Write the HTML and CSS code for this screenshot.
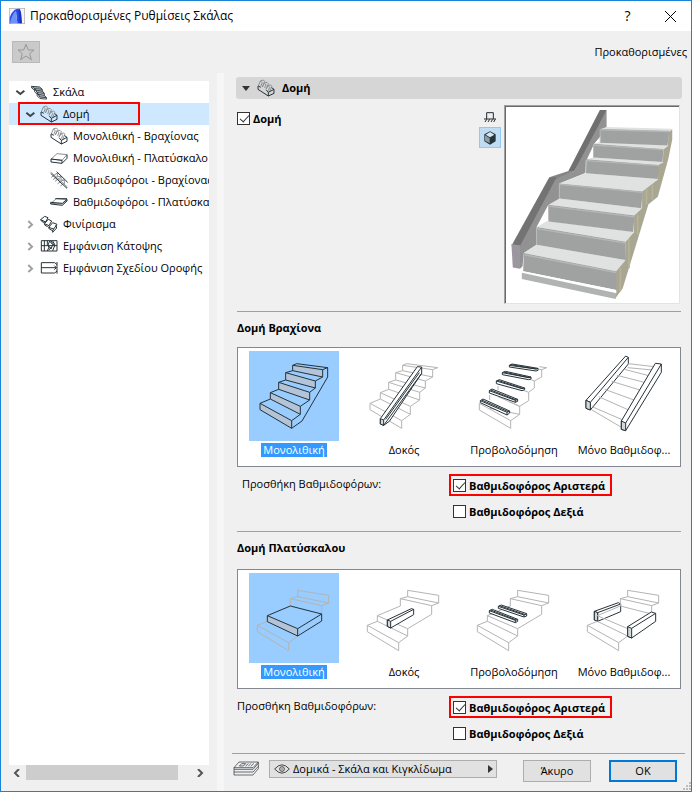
FILE: index.html
```html
<!DOCTYPE html>
<html lang="el">
<head>
    <meta charset="UTF-8" />
    <meta name="viewport" content="width=device-width, initial-scale=1.0" />
    <title>Προκαθορισμένες Ρυθμίσεις Σκάλας</title>
    <link rel="stylesheet" href="styles.css">
</head>
<body>
<!-- shared drawings -->
<svg class="defs" aria-hidden="true">
    <symbol id="i-structure" viewBox="0 0 54 54">
        <path class="soft" d="M4 21L10 6l9-3 4 4-7 17M16 24l6-12 8-2 4 4-7 17M27 31l6-11 8-2 4 4-7 15M10 6l6 5-5 12M22 13l5 4-4 10M34 21l4 4-4 10"/>
        <path class="dark" d="M3 21v10l31 20 17-8V31l-7-5M34 51V40M4 21l7 4M34 40l17-9M34 40l-6-7"/>
    </symbol>
    <symbol id="i-landing" viewBox="0 0 54 54">
        <path class="soft" d="M3 30l18-16 30 3-15 17z"/>
        <path class="dark" d="M3 30v9l33 4 15-15V17M36 34v9M3 30l33 4"/>
    </symbol>
    <symbol id="i-stringer" viewBox="0 0 54 54">
        <path class="soft" d="M4 19l18-13v10l11 1v10l10 1v10M9 26l14-10M15 31l18-13M23 38l18-12M31 45l14-10"/>
        <path class="dark" d="M2 7l49 45M20 2l33 32"/>
        <path class="soft" d="M2 3l51 46"/>
    </symbol>
    <symbol id="i-slab" viewBox="0 0 54 54">
        <path class="soft" d="M3 31l16-14 32 3-13 13z"/>
        <path class="dark" d="M2 28l35 3 14-12v5L37 37 2 33zM16 17h35"/>
    </symbol>
    <symbol id="i-steps" viewBox="0 0 54 54">
        <path class="dark" d="M2 14L14 4l10 4-7 13zM2 14l3 5 8 4M17 21l-4 2M13 26l12-13 10 5-8 14zM13 26l2 5 8 4M26 37l12-14 13 5-10 14zM26 37l2 5 10 5 3-5M38 47v5l12-13-2-9"/>
    </symbol>
    <symbol id="i-stack" viewBox="0 0 54 54">
        <path class="fill" d="M2 8l27 2 9 8-25-2zM12 20l27 4 6 8-24-3zM21 34l24 4 7 8-22-2z"/>
        <path class="dark" d="M2 8l27 2 9 8-25-2zM13 16l-1 4 27 4 6 8-24-3zM21 29v5l24 4 7 8-22-2zM38 18v6M45 32v6M2 8v5l10 8M12 21v5l9 9M21 35v5l9 9 22 2v-5"/>
    </symbol>
    <symbol id="i-plan" viewBox="0 0 54 54">
        <path class="dark" d="M4 11h47M4 42h47M4 11v31M13 11v31M22 11v12l5 7-5 12M29 12l-5 12 9 12 5-13zM38 12l7 12-7 17M51 11v31M4 26h47M33 12l9 12M26 40l8-10"/>
    </symbol>
    <symbol id="i-ceiling" viewBox="0 0 54 54">
        <path class="dark" d="M4 11h40l7 6M4 26h44M4 42h40l7-6M51 9v35M4 11v31M43 20l6 6-6 6"/>
    </symbol>
    <symbol id="i-open" viewBox="0 0 30 30">
        <path class="chev-open" d="M4 11l12 10L28 11"/>
    </symbol>
    <symbol id="i-closed" viewBox="0 0 30 30">
        <path class="chev-closed" d="M10 6l11 11-11 10"/>
    </symbol>
    <symbol id="flight" viewBox="39 33 270 270">
        <path d="M72 190L103 177L193 223L167 242V265L72 209ZM72 190L167 242M103 177V158L193 199V223M103 158L128 148L221 180L193 199M128 148V127L221 157V180M128 127L149 120L238 144L221 157M149 120V98L238 123V144M149 98L170 92L260 111L238 123M170 92V76L260 89V111M170 76L182 71L275 83L260 89"/>
    </symbol>
    <symbol id="landing" viewBox="39 39 270 270">
        <path d="M185 91L278 106V129L185 110ZM185 110L163 116L257 137L278 129M163 116V138M257 137V163L185 206V228L158 248V272L64 215V196L158 248M64 196L94 184V167L185 206M94 167L163 138M94 184L185 228"/>
    </symbol>
</svg>

<div class="window">
    <header class="titlebar">
        <svg class="app-icon" viewBox="0 0 48 48">
            <rect x="1" y="1" width="46" height="46" fill="#f4f4f4" stroke="#aaa" stroke-width="2"/>
            <path d="M2 46V30C7 12 18 2 29 2L37 46H25L21 10C12 16 8 31 8 46z" fill="#2449e8"/>
            <path d="M3 46C5 31 12 16 21 10l4 36z" fill="#6f90f4"/>
            <path d="M29 2c5 0 8 6 10 44h-7z" fill="#1a2fc0"/>
        </svg>
        <h1>Προκαθορισμένες Ρυθμίσεις Σκάλας</h1>
        <button class="caption-btn" aria-label="Βοήθεια">?</button>
        <button class="caption-btn" aria-label="Κλείσιμο">
            <svg width="11" height="11" viewBox="0 0 11 11"><path d="M0 0l11 11M11 0L0 11" stroke="#000" fill="none"/></svg>
        </button>
    </header>

    <div class="toolbar">
        <button class="favorite" aria-label="Αγαπημένα">
            <svg width="18" height="18" viewBox="0 0 54 54"><path d="M27 4l7 17h17L38 32l5 18-16-11-16 11 5-18L3 21h17z" fill="none" stroke="#979797" stroke-width="3"/></svg>
        </button>
        <span>Προκαθορισμένες</span>
    </div>

    <div class="content">
        <nav class="sidebar">
            <ul class="tree">
                <li class="level-0"><svg class="chev"><use href="#i-open"/></svg><svg class="icon"><use href="#i-stack"/></svg><span>Σκάλα</span></li>
                <li class="level-1 selected"><svg class="chev"><use href="#i-open"/></svg><svg class="icon"><use href="#i-structure"/></svg><span>Δομή</span></li>
                <li class="level-2"><svg class="icon"><use href="#i-structure"/></svg><span>Μονολιθική - Βραχίονας</span></li>
                <li class="level-2"><svg class="icon"><use href="#i-landing"/></svg><span>Μονολιθική - Πλατύσκαλο</span></li>
                <li class="level-2"><svg class="icon"><use href="#i-stringer"/></svg><span>Βαθμιδοφόροι - Βραχίονας</span></li>
                <li class="level-2"><svg class="icon"><use href="#i-slab"/></svg><span>Βαθμιδοφόροι - Πλατύσκαλο</span></li>
                <li class="level-1"><svg class="chev"><use href="#i-closed"/></svg><svg class="icon"><use href="#i-steps"/></svg><span>Φινίρισμα</span></li>
                <li class="level-1"><svg class="chev"><use href="#i-closed"/></svg><svg class="icon"><use href="#i-plan"/></svg><span>Εμφάνιση Κάτοψης</span></li>
                <li class="level-1"><svg class="chev"><use href="#i-closed"/></svg><svg class="icon"><use href="#i-ceiling"/></svg><span>Εμφάνιση Σχεδίου Οροφής</span></li>
            </ul>
            <div class="scrollbar">
                <svg width="7" height="8" viewBox="0 0 7 8"><path d="M6 0L2 4l4 4" fill="none" stroke="#555" stroke-width="2"/></svg>
                <div class="thumb"></div>
                <svg width="7" height="8" viewBox="0 0 7 8"><path d="M1 0l4 4-4 4" fill="none" stroke="#555" stroke-width="2"/></svg>
            </div>
        </nav>

        <div class="splitter"></div>

        <main class="panel">
            <div class="settings">
                <h2 class="panel-title">
                    <svg width="8" height="5" viewBox="0 0 8 5"><path d="M0 0h8L4 5z" fill="#333"/></svg>
                    <svg class="icon"><use href="#i-structure"/></svg>
                    Δομή
                </h2>

                <div class="preview-row">
                    <label class="check"><input type="checkbox" checked>Δομή</label>
                    <div class="view-buttons">
                        <button aria-label="Όψη">
                            <svg width="12" height="12" viewBox="0 0 36 36"><path d="M8 24V5h20v19M0 24h36M3 33l5-8M12 33l5-8M21 33l5-8M29 33l5-8" fill="none" stroke="#222b30" stroke-width="3"/></svg>
                        </button>
                        <button class="active" aria-label="Τρισδιάστατη όψη">
                            <svg width="12" height="14" viewBox="0 0 36 42">
                                <path d="M18 1l17 9v21L18 41 1 31V10z" fill="#25333b"/>
                                <path d="M18 3l13 8-13 8-13-8z" fill="#d3e6f4"/>
                                <path d="M3 13l14 8v16L3 29z" fill="#8b9aa3"/>
                            </svg>
                        </button>
                    </div>
                    <div class="preview">
                        <svg viewBox="18 21 519 588">
                            <path d="M321 33V90L284 134L261 183L256 222L180 252V300L146 318L112 382V435L74 460L70 500L62 507V435L170 234L225 215L301 60z" fill="#929292"/>
                            <path d="M301 33h20L225 215h-18z" fill="#707070"/>
                            <path d="M150 234l57-19h18l-55 23z" fill="#858585"/>
                            <path d="M150 234h22L63 438H37z" fill="#737373"/>
                            <path d="M37 433l26 5v69l-22-4z" fill="#9c979f"/>
                            <path d="M517 91V121L505 180L474 292L446 314L369 566L346 596L348 513L376 482L378 425L403 397V345L427 325V275L474 240V197L489 187L491 150L504 140L506 97z" fill="#a9a691"/>
                            <path d="M440 268v46M458 256v46M388 415v90M414 345v60M362 504v70" stroke="#b6b29c" stroke-width="5"/>
                            <path d="M321 84l197 5-8 8-206-7zM302 128l204 11-15 11-207-16zM281 175l211 13-16 9-215-17zM258 222l218 17-48 37-248-24zM180 297l247 29-23 22-256-32zM144 364l259 33-25 29-266-44zM112 435l266 46-28 33-276-54z" fill="#e0e2e1"/>
                            <path d="M304 90l204 6-5 43-201-8zM284 134l207 16-3 38-207-13zM261 180l215 17-2 42-215-17zM180 252l248 24-3 50-245-29zM148 316l256 32-3 49-253-31zM112 382l266 44-1 55-265-46zM74 460l276 54v56L72 514z" fill="#a0a2a1"/>
                            <path d="M302 90v38M282 136v39M259 183v38M180 252v42M148 318v45M112 384v49" stroke="#b9b9b9" stroke-width="3"/>
                            <path d="M72 514l278 56 0 11L68 520z" fill="#fff"/>
                            <path d="M68 519l280 60v18L68 537z" fill="#b1b3b3"/>
                            <path d="M305 92l203 5M284 138l207 13M261 184l216 15M180 255l248 24M148 320l256 32M112 387l266 43M76 465l274 53" stroke="#b5b7b6" stroke-width="4"/>
                        </svg>
                    </div>
                </div>

                <section>
                    <h3>Δομή Βραχίονα</h3>
                    <div class="gallery">
                        <label>
                            <input type="radio" name="flight" checked>
                            <svg viewBox="39 33 270 270">
                                <path class="face" d="M72 190L167 242V265L72 209ZM103 158L193 199V223L103 177ZM128 127L221 157V180L128 148ZM149 98L238 123V144L149 120ZM170 76L260 89V111L170 92Z"/>
                                <g class="line"><use href="#flight" x="39" y="33" width="270" height="270"/><path d="M275 83V111L198 243L167 265"/></g>
                            </svg>
                            <span>Μονολιθική</span>
                        </label>
                        <label>
                            <input type="radio" name="flight">
                            <svg viewBox="39 33 270 270">
                                <use class="ghost" href="#flight" x="39" y="33" width="270" height="270"/>
                                <path class="bar" d="M103 236L214 80L227 81V100L130 244L113 256L103 252Z"/>
                                <path class="face dark-face" d="M103 236L113 240V256L103 252Z"/>
                                <path class="line" d="M113 240L227 81M113 256L227 100M119 238L220 98"/>
                            </svg>
                            <span>Δοκός</span>
                        </label>
                        <label>
                            <input type="radio" name="flight">
                            <svg viewBox="39 33 270 270">
                                <path class="ghost" d="M70 190V210L164 265V242L191 223V199L218 182V157L235 144V123L257 111V89L272 83L250 80M70 190L164 242M101 180V165M126 150V138M191 199L160 185M218 157L200 150M235 123L220 117M257 89L240 86M101 205L191 223M126 170L191 199"/>
                                <path class="bar" d="M73 182L81 177L161 213V219L153 225L73 188ZM100 152L108 147L185 178V184L178 187L100 159ZM121 123L130 119L206 144V149L198 152L121 131ZM139 98L148 94L225 111V117L218 119L139 104ZM160 76L168 72L246 85V91L240 93L160 81Z"/>
                                <path class="line" d="M73 182L153 217L161 213M153 217V225M77 180L157 215M100 152L178 181L185 178M178 181V187M104 150L181 180M121 123L198 146L206 144M125 121L202 146M139 98L218 113L225 111M143 96L221 113M160 76L240 87L246 85M164 74L242 87"/>
                            </svg>
                            <span>Προβολοδόμηση</span>
                        </label>
                        <label>
                            <input type="radio" name="flight">
                            <svg viewBox="39 33 270 270">
                                <path class="bar" d="M60 181L179 48L187 52V72L73 210L60 205Z"/>
                                <path class="ghost" d="M73 207L168 263M78 200L171 240M98 170L188 210M116 148L204 180M137 124L222 150M153 106L235 127M175 88L252 108M187 71L265 80M185 83L260 90"/>
                                <path class="line" d="M60 181L73 187V210M73 187L187 52"/>
                                <path class="bar" d="M166 243L268 70L286 72V97L179 272L166 268Z"/>
                                <path class="face dark-face" d="M166 243L179 249V272L166 268ZM60 181L73 187V210L60 205Z"/>
                                <path class="line" d="M179 249L286 72"/>
                            </svg>
                            <span>Μόνο Βαθμιδοφ...</span>
                        </label>
                    </div>
                    <div class="stringers inset">
                        <span>Προσθήκη Βαθμιδοφόρων:</span>
                        <div class="checks">
                            <label class="check marked"><input type="checkbox" checked>Βαθμιδοφόρος Αριστερά</label>
                            <label class="check"><input type="checkbox">Βαθμιδοφόρος Δεξιά</label>
                        </div>
                    </div>
                </section>

                <section class="landing">
                    <h3>Δομή Πλατύσκαλου</h3>
                    <div class="gallery">
                        <label>
                            <input type="radio" name="landing" checked>
                            <svg viewBox="39 39 270 270">
                                <path class="ghost" d="M185 91L278 106V129L185 110ZM185 110L163 116L257 137L278 129M163 116V138M257 137V163M185 228L158 248V272L64 215V196L158 248M64 196L94 184"/>
                                <path class="face" d="M94 167L185 206V228L94 185Z"/>
                                <path class="line" d="M94 167L163 138L257 162V183L185 228L94 185ZM94 167L185 206L257 162M185 206V228"/>
                            </svg>
                            <span>Μονολιθική</span>
                        </label>
                        <label>
                            <input type="radio" name="landing">
                            <svg viewBox="39 39 270 270">
                                <use class="ghost" href="#landing" x="39" y="39" width="270" height="270"/>
                                <path class="bar" d="M124 180L196 146L203 148V164L134 204L124 199Z"/>
                                <path class="face dark-face" d="M124 180L134 184V204L124 199Z"/>
                                <path class="line" d="M134 184L203 148"/>
                            </svg>
                            <span>Δοκός</span>
                        </label>
                        <label>
                            <input type="radio" name="landing">
                            <svg viewBox="39 39 270 270">
                                <use class="ghost" href="#landing" x="39" y="39" width="270" height="270"/>
                                <path class="bar" d="M100 152L109 148L185 178V184L178 188L100 159ZM127 139L136 135L212 161V168L204 171L127 145Z"/>
                                <path class="line" d="M100 152L178 181L185 178M178 181V188M104 150L181 180M127 139L204 165L212 161M204 165V171M131 137L208 164"/>
                            </svg>
                            <span>Προβολοδόμηση</span>
                        </label>
                        <label>
                            <input type="radio" name="landing">
                            <svg viewBox="39 39 270 270">
                                <path class="bar" d="M85 154L157 128L164 132V155L95 184L85 180Z"/>
                                <path class="line" d="M85 154L95 158V184M95 158L164 132"/>
                                <path class="face dark-face" d="M85 154L95 158V184L85 180Z"/>
                                <path class="ghost" d="M185 91L278 106V129L185 110ZM185 110L163 116L257 137L278 129M163 116V138M257 137V163M163 138L257 162M94 167L185 206M94 167L163 138M185 228L158 248V272L64 215V196L158 248M64 196L94 184L185 228"/>
                                <path class="bar" d="M185 200L256 156L269 160V184L197 234L185 229Z"/>
                                <path class="face dark-face" d="M185 200L197 205V234L185 229Z"/>
                                <path class="line" d="M197 205L269 160"/>
                            </svg>
                            <span>Μόνο Βαθμιδοφ...</span>
                        </label>
                    </div>
                    <div class="stringers">
                        <span>Προσθήκη Βαθμιδοφόρων:</span>
                        <div class="checks">
                            <label class="check marked"><input type="checkbox" checked>Βαθμιδοφόρος Αριστερά</label>
                            <label class="check"><input type="checkbox">Βαθμιδοφόρος Δεξιά</label>
                        </div>
                    </div>
                </section>
            </div>

            <footer class="actions">
                <svg width="26" height="16" viewBox="0 0 78 48">
                    <path d="M18 3h58L60 20H3zM3 20v5h57l16-18v-4M3 25v8h57l16-17V7M3 33v9h57l16-19v-7" fill="none" stroke="#222b30" stroke-width="2"/>
                    <path d="M26 8h12l-7 7H19zM46 7l-8 9M54 7l-8 9M62 7l-8 9" fill="none" stroke="#222b30" stroke-width="2"/>
                </svg>
                <div class="layer">
                    <svg width="16" height="10" viewBox="0 0 48 30">
                        <path d="M2 15Q24-10 46 15Q24 40 2 15z" fill="none" stroke="#444" stroke-width="3"/>
                        <circle cx="24" cy="15" r="7" fill="none" stroke="#444" stroke-width="3"/>
                        <circle cx="24" cy="15" r="2" fill="#444"/>
                    </svg>
                    <select aria-label="Στρώση"><option>Δομικά - Σκάλα και Κιγκλίδωμα</option></select>
                    <svg width="5" height="8" viewBox="0 0 5 8"><path d="M0 0l5 4-5 4z" fill="#333"/></svg>
                </div>
                <button class="btn">Άκυρο</button>
                <button class="btn primary">OK</button>
            </footer>
        </main>
    </div>
    <svg class="grip" width="8" height="8" viewBox="0 0 8 8"><path d="M6 0h2v2H6zM3 3h2v2H3zM6 3h2v2H6zM0 6h2v2H0zM3 6h2v2H3zM6 6h2v2H6z" fill="#bdbdbd"/></svg>
</div>
</body>
</html>
```
FILE: styles.css
```css
*,
*::after {
    box-sizing: border-box;
}
body {
    margin: 0;
    font-family: "Open Sans", "Noto Sans", sans-serif;
    font-size: 11px;
    line-height: 14px;
    color: #000;
    background: #f0f0f0;
}
button,
select {
    font: inherit;
    color: inherit;
}
h1, h2, h3 {
    margin: 0;
    font-size: 11px;
}
svg {
    display: block;
    flex: none;
}
.defs {
    position: absolute;
    width: 0;
    height: 0;
}
.window {
    position: relative;
    display: flex;
    flex-direction: column;
    min-height: 100vh;
    border: 1px solid #1883d7;
    background: #f0f0f0;
}

/* title bar */
.titlebar {
    display: flex;
    align-items: center;
    height: 30px;
    padding-left: 8px;
    background: #fff;
}
.titlebar h1 {
    flex: 1;
    margin-left: 5px;
    font-size: 12px;
    font-weight: normal;
}
.app-icon {
    width: 16px;
    height: 16px;
}
.caption-btn {
    display: flex;
    align-items: center;
    justify-content: center;
    width: 45px;
    height: 30px;
    padding: 0;
    border: 0;
    background: none;
    font-size: 14px;
}
.caption-btn:last-child {
    width: 41px;
}

.toolbar {
    display: flex;
    align-items: center;
    justify-content: space-between;
    height: 42px;
    padding: 0 4px 0 11px;
}
.favorite {
    display: flex;
    align-items: center;
    justify-content: center;
    width: 28px;
    height: 22px;
    padding: 0;
    border: 1px solid #b9b9b9;
    background: #cacaca;
}

.content {
    flex: 1;
    display: flex;
}

/* tree */
.sidebar {
    display: flex;
    flex-direction: column;
    width: 216px;
    padding: 8px 8px 11px;
}
.tree {
    flex: 1;
    margin: 0;
    padding: 0;
    list-style: none;
    background: #fff;
    overflow: hidden;
}
.tree li {
    position: relative;
    display: flex;
    align-items: center;
    height: 22px;
    white-space: nowrap;
}
.tree span {
    margin-left: 5px;
}
.level-0 {
    padding-left: 6px;
}
.level-1 {
    padding-left: 16px;
}
.level-2 {
    padding-left: 41px;
}
.tree .selected {
    background: #cde8ff;
}
.selected::after {
    content: "";
    position: absolute;
    inset: -1px 69px 0 9px;
    border: 2px solid #f00;
}
.chev {
    width: 10px;
    height: 10px;
    margin-right: 5px;
}
.icon {
    width: 18px;
    height: 18px;
}
.level-0 .icon {
    width: 16px;
    height: 16px;
    margin: 0 1px;
}
.chev-open,
.chev-closed {
    fill: none;
    stroke: #444;
    stroke-width: 6;
}
.chev-closed {
    stroke: #a0a0a0;
}
.soft,
.dark {
    fill: none;
    stroke: #8b9194;
    stroke-width: 3;
}
.dark {
    stroke: #263238;
}
.fill {
    fill: #aab0b3;
}
.scrollbar {
    display: flex;
    align-items: center;
    gap: 6px;
    height: 15px;
    padding: 0 5px 0 4px;
}
.thumb {
    width: 152px;
    height: 15px;
    margin-right: auto;
    background: #cdcdcd;
}

.splitter {
    width: 7px;
    background: #f6f6f6;
}

/* settings panel */
.panel {
    flex: 1;
    display: flex;
    flex-direction: column;
    min-width: 0;
    padding: 4px 6px 0 8px;
}
.settings {
    flex: 1;
    padding: 0 4px 0 5px;
}
.panel-title {
    display: flex;
    align-items: center;
    gap: 7px;
    height: 22px;
    margin: 0 -1px;
    padding-left: 6px;
    border-radius: 3px;
    background: #d6d6d6;
}
.preview-row {
    display: flex;
    align-items: flex-start;
    padding: 6px 1px 7px 0;
}
.preview-row .check {
    margin-top: 7px;
}
.check {
    display: flex;
    align-items: center;
    gap: 3px;
    height: 13px;
    font-weight: bold;
    white-space: nowrap;
}
.check input {
    position: relative;
    appearance: none;
    width: 13px;
    height: 13px;
    margin: 0;
    border: 1px solid #333;
    background: #fff;
}
.check input:checked::after {
    content: "";
    position: absolute;
    left: 4px;
    top: 0;
    width: 5px;
    height: 9px;
    border: solid #333;
    border-width: 0 1px 1px 0;
    transform: rotate(42deg);
}
.view-buttons {
    margin: 1px 3px 0 auto;
}
.view-buttons button {
    display: flex;
    align-items: center;
    justify-content: center;
    width: 22px;
    height: 21px;
    padding: 0;
    border: 0;
    background: none;
}
.view-buttons .active {
    border: 1px solid #90c8f6;
    background: #c0dcf3;
}
.preview {
    width: 176px;
    height: 199px;
    border: 1px solid;
    border-color: #a0a0a0 #e3e3e3 #e3e3e3 #a0a0a0;
    background: #fff;
    box-shadow: inset 1px 1px #696969;
}
.preview svg {
    width: 174px;
    height: 197px;
}

section {
    border-top: 1px solid #a0a0a0;
    padding-bottom: 13px;
}
section h3 {
    padding: 9px 0 12px;
}
.landing h3 {
    padding-bottom: 14px;
}
.gallery {
    display: grid;
    grid-template-columns: repeat(4, 90px);
    gap: 20px;
    height: 120px;
    padding: 3px 11px;
    border: 1px solid #828790;
    background: #fff;
}
.gallery label {
    position: relative;
    display: flex;
    flex-direction: column;
    align-items: center;
    white-space: nowrap;
}
.gallery input {
    position: absolute;
    opacity: 0;
    margin: 0;
}
.gallery svg {
    width: 90px;
    height: 90px;
}
.gallery span {
    margin-top: 2px;
    padding: 0 2px;
}
.gallery input:checked ~ svg {
    background: #99ccff;
}
.gallery input:checked ~ span {
    background: #3399ff;
    color: #fff;
}
.line,
.bar {
    fill: none;
    stroke: #263238;
    stroke-width: 3;
}
.bar {
    fill: #fff;
}
.ghost {
    fill: none;
    stroke: #b4b4b4;
    stroke-width: 3;
}
.face {
    fill: #b4c4d8;
}
.dark-face {
    fill: #d5d8da;
    stroke: #263238;
    stroke-width: 3;
}

.stringers {
    display: flex;
    padding-top: 10px;
}
.stringers > span {
    flex: none;
    width: 216px;
}
.inset > span {
    padding-left: 5px;
}
.checks {
    display: flex;
    flex-direction: column;
    gap: 13px;
    padding-top: 2px;
}
.marked {
    position: relative;
}
.marked::after {
    content: "";
    position: absolute;
    inset: -5px auto -4px -4px;
    width: 163px;
    border: 2px solid #f00;
}
.settings .landing {
    padding-bottom: 0;
}

/* footer */
.actions {
    display: flex;
    align-items: flex-start;
    height: 38px;
    padding: 6px 8px 0 1px;
    border-top: 1px solid #a0a0a0;
}
.actions > svg {
    margin-top: 1px;
}
.layer {
    display: flex;
    align-items: center;
    flex: 1;
    height: 18px;
    margin-left: 10px;
    padding: 0 3px 0 4px;
    border: 1px solid #adadad;
    background: #e1e1e1;
}
.layer select {
    flex: 1;
    min-width: 0;
    padding: 0 3px;
    border: 0;
    background: none;
    appearance: none;
}
.btn {
    width: 68px;
    height: 22px;
    margin-left: 18px;
    padding: 0;
    border: 1px solid #adadad;
    background: #e1e1e1;
}
.layer + .btn {
    margin-left: 26px;
}
.primary {
    border: 2px solid #0078d7;
}
.grip {
    position: absolute;
    right: 0;
    bottom: 1px;
}
```
